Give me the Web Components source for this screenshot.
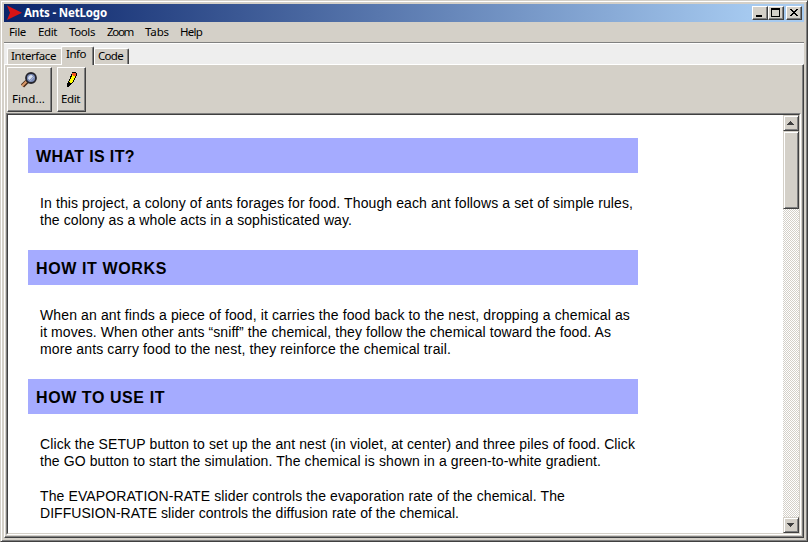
<!DOCTYPE html>
<html lang="en"><head><meta charset="utf-8"><title>Ants - NetLogo</title>
<style>html,body{margin:0;height:100%;overflow:hidden;background:#d4d0c8}</style></head><body>
<net-window></net-window>
<script>
const define=(name,markup,setup)=>customElements.define(name,class extends HTMLElement{
  connectedCallback(){
    if(this.shadowRoot)return;
    this.attachShadow({mode:'open'}).innerHTML=markup;
    if(setup)setup(this,this.shadowRoot);
  }
});
// A single line of text spaced to an exact advance width.
define('fit-text',`<style>:host{display:block;white-space:pre;width:max-content}span{display:inline-block}</style><span><slot></slot></span>`,(el,root)=>{
  const s=root.querySelector('span'),w=+el.getAttribute('w'),n=el.textContent.length;
  el.style.width=w+'px';
  s.style.letterSpacing=((w-s.getBoundingClientRect().width)/n)+'px';
});
define('caption-button',`<style>:host{display:block;box-sizing:border-box;width:16px;height:14px;background:#d4d0c8;border:1px solid;border-color:#fff #404040 #404040 #fff;box-shadow:inset -1px -1px #808080}svg{display:block}</style><svg width="14" height="12" shape-rendering="crispEdges"></svg>`,(el,root)=>{
  root.querySelector('svg').innerHTML={
    min:'<path d="M3 8h6v2H3z"/>',
    max:'<path fill-rule="evenodd" d="M2 1h9v9H2zM3 3v6h7V3z"/>',
    close:'<path d="M3 2h2v1h1v1h2V3h1V2h2v1h-1v1H9v1H8v1h1v1h1v1h1v1H9V8H8V7H6v1H5v1H3V8h1V7h1V6h1V5H5V4H4V3H3z"/>'}[el.getAttribute('kind')];
});
define('title-bar',`<style>:host{display:flex;align-items:center;height:18px;background:linear-gradient(90deg,#0a246a,#a6caf0 750px);color:#fff;font:bold 11.5px/18px "Noto Sans","DejaVu Sans",sans-serif;padding:0 2px;box-sizing:border-box}svg{margin-right:2px}.b{display:flex;margin-left:auto}.b :last-child{margin-left:2px}</style>
<svg width="16" height="18"><path d="M1 1.5 16 8.7 1 16 4 8.7z" fill="#d81414"/></svg><fit-text w="83">Ants - NetLogo</fit-text>
<div class="b"><caption-button kind="min"></caption-button><caption-button kind="max"></caption-button><caption-button kind="close"></caption-button></div>`);
define('menu-bar',`<style>:host{display:flex;height:21px;box-sizing:border-box;border-bottom:1px solid #808080;padding-left:5px;gap:12px;line-height:19px;margin-bottom:1px;box-shadow:0 1px #fff}fit-text:last-child{margin-left:-1px}</style>
<fit-text w="17">File</fit-text><fit-text w="19">Edit</fit-text><fit-text w="26">Tools</fit-text><fit-text w="26">Zoom</fit-text><fit-text w="24">Tabs</fit-text><fit-text w="22">Help</fit-text>`);
define('tab-item',`<style>:host{display:block;box-sizing:border-box;height:16px;background:#d4d0c8;border:1px solid #fff;border-right:0;border-bottom:0;border-radius:2px 0 0 0;padding-left:3px;line-height:13px}
:host([edge]){border-right:1px solid #404040;box-shadow:inset -1px 0 #808080;border-radius:2px 2px 0 0}:host([active]){height:19px;margin-bottom:-1px;padding-left:4px;line-height:14px;position:relative}</style><slot></slot>`);
define('tab-strip',`<style>:host{display:flex;align-items:flex-end;height:20px;background:#eee;padding-left:3px}</style>
<tab-item style="width:54px"><fit-text w="45">Interface</fit-text></tab-item><tab-item active edge style="width:33px"><fit-text w="20">Info</fit-text></tab-item><tab-item edge style="width:35px"><fit-text w="25">Code</fit-text></tab-item>`);
define('tool-button',`<style>:host{display:flex;flex-direction:column;align-items:center;box-sizing:border-box;height:45px;border:1px solid;border-color:#fff #404040 #404040 #fff;box-shadow:inset -1px -1px #808080;padding:4px 2px 0 0;line-height:14px}::slotted(svg){display:block;margin-bottom:4px}</style><slot></slot>`);
define('tool-bar',`<style>:host{display:flex;gap:5px;padding:2px 0 0 2px;height:46px}</style>
<tool-button style="width:45px"><svg width="16" height="16"><path d="M6 9.5 1.5 14" stroke="#4a2a18" stroke-width="4.5"/><path d="M5.5 9.5 1 14" stroke="#d89868" stroke-width="2.2"/><circle cx="10" cy="6" r="5" fill="#7c8cb8" stroke="#24242c" stroke-width="1.8"/><path d="M7 6.5Q7.5 3.2 10.5 3l1.5 1.5L8.5 8z" fill="#d8e0ee"/><path d="M9 9.2 13 5" stroke="#a8b4d4"/></svg><fit-text w="33">Find...</fit-text></tool-button>
<tool-button style="width:29px"><svg width="16" height="16" shape-rendering="crispEdges"><g transform="translate(1)"><path d="M8 0h4v1h1v3h-1v2h-1v2h-1v2H9v1H8v1H7v1H6v1H5v1H3v-4h1V9h1V7h1V4h1V2h1z"/><path d="M8 3h1v1h2v2h-1v2H9v2H8v1H6v-1H5V9h1V7h1V5h1z" fill="#ff0"/><path d="M8 1h4v3h-1V4H9V3H8z" fill="#f05020"/></g></svg><fit-text w="19">Edit</fit-text></tool-button>`);
define('scroll-bar',`<style>:host{display:flex;flex-direction:column;width:16px;background:repeating-conic-gradient(#fff 0 25%,#d4d0c8 0 50%) 0 0/2px 2px}
div{box-sizing:border-box;height:16px;background:#d4d0c8;border:1px solid;border-color:#d4d0c8 #404040 #404040 #d4d0c8;box-shadow:inset 1px 1px #fff,inset -1px -1px #808080}.thumb{height:78px}.down{margin-top:auto}svg{display:block}</style>
<div><svg width="14" height="14" shape-rendering="crispEdges"><path fill="#404040" d="M6 5h1v1h1v1h1v1h1v1H3V8h1V7h1V6h1z"/></svg></div><div class="thumb"></div><div class="down"><svg width="14" height="14" shape-rendering="crispEdges"><path fill="#404040" d="M3 5h7v1H9v1H8v1H7v1H6V8H5V7H4V6H3z"/></svg></div>`);
define('info-section',`<style>:host{display:block;width:610px}header{background:#a5abff;height:35px;box-sizing:border-box;padding-left:8px;font:bold 16px/38px "Liberation Sans",Arial,sans-serif}section{padding:22px 0 21px 12px}</style><header><slot name="title"></slot></header><section><slot></slot></section>`);
define('info-page',`<style>:host{display:block;flex:1;overflow:hidden;background:#fff;padding:23px 0 0 20px;font:14px/17px "Liberation Sans",Arial,sans-serif}.gap{margin-top:18px}</style>
<info-section><fit-text slot="title" w="99">WHAT IS IT?</fit-text>
<fit-text w="593">In this project, a colony of ants forages for food. Though each ant follows a set of simple rules,</fit-text><fit-text w="312">the colony as a whole acts in a sophisticated way.</fit-text></info-section>
<info-section><fit-text slot="title" w="131">HOW IT WORKS</fit-text>
<fit-text w="590">When an ant finds a piece of food, it carries the food back to the nest, dropping a chemical as</fit-text><fit-text w="571">it moves. When other ants “sniff” the chemical, they follow the chemical toward the food. As</fit-text><fit-text w="411">more ants carry food to the nest, they reinforce the chemical trail.</fit-text></info-section>
<info-section><fit-text slot="title" w="129">HOW TO USE IT</fit-text>
<fit-text w="595">Click the SETUP button to set up the ant nest (in violet, at center) and three piles of food. Click</fit-text><fit-text w="561">the GO button to start the simulation. The chemical is shown in a green-to-white gradient.</fit-text>
<fit-text class="gap" w="525">The EVAPORATION-RATE slider controls the evaporation rate of the chemical. The</fit-text><fit-text w="419">DIFFUSION-RATE slider controls the diffusion rate of the chemical.</fit-text></info-section>`);
define('net-window',`<style>:host{display:flex;flex-direction:column;box-sizing:border-box;width:808px;height:542px;border:1px solid;border-color:#d4d0c8 #404040 #404040 #d4d0c8;box-shadow:inset 1px 1px #fff,inset -1px -1px #808080;padding:3px;background:#d4d0c8;color:#000;font:11.5px "Noto Sans","DejaVu Sans",sans-serif}
.panel{flex:1;min-height:0;display:flex;flex-direction:column;border:1px solid;border-color:#fff #404040 #404040 #fff;box-shadow:inset -1px -1px #808080}
.view{flex:1;min-height:0;display:flex;margin:0 2px 2px 1px;border:1px solid;border-color:#808080 #fff #fff #808080}.in{display:flex;flex:1;min-width:0;border:1px solid;border-color:#404040 #d4d0c8 #d4d0c8 #404040}</style>
<title-bar></title-bar><menu-bar></menu-bar><tab-strip></tab-strip><div class="panel"><tool-bar></tool-bar><div class="view"><div class="in"><info-page></info-page><scroll-bar></scroll-bar></div></div></div>`);
</script></body></html>
